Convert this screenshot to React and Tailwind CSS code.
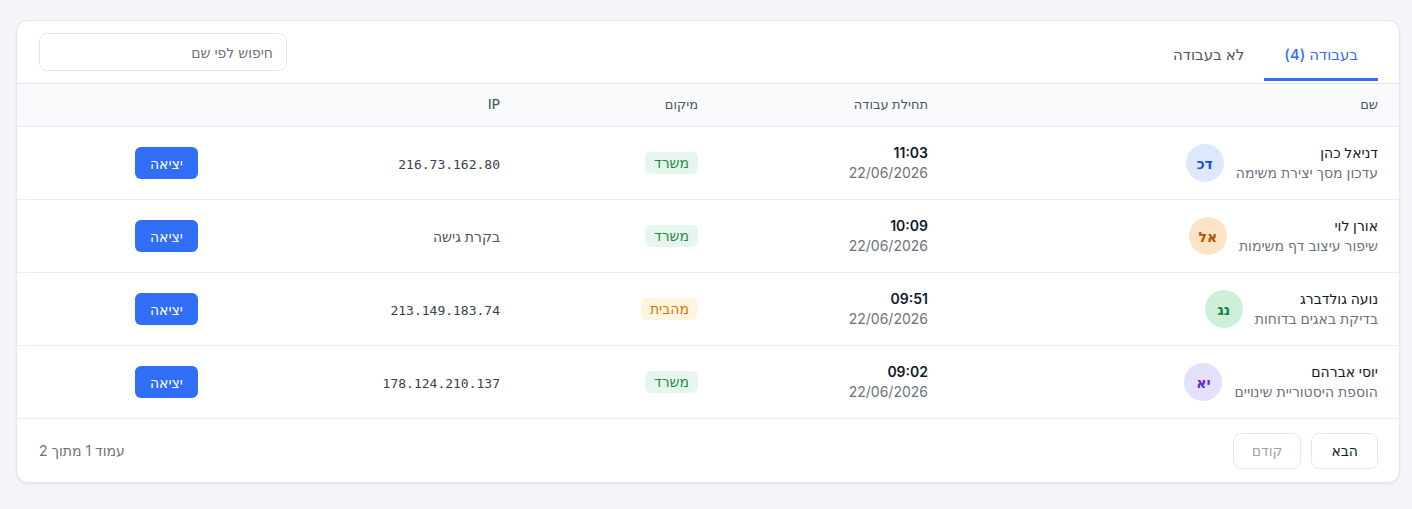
import React from "react";

const rows = [
  { name: "דניאל כהן", task: "עדכון מסך יצירת משימה", initials: "דכ", av: "bg-[#dde8fd] text-[#1d4ed8]", time: "11:03", date: "22/06/2026", loc: "משרד", ip: "216.73.162.80", mono: true },
  { name: "אורן לוי", task: "שיפור עיצוב דף משימות", initials: "אל", av: "bg-[#fde3c6] text-[#b45309]", time: "10:09", date: "22/06/2026", loc: "משרד", ip: "בקרת גישה", mono: false },
  { name: "נועה גולדברג", task: "בדיקת באגים בדוחות", initials: "נג", av: "bg-[#cdeed7] text-[#15803d]", time: "09:51", date: "22/06/2026", loc: "מהבית", ip: "213.149.183.74", mono: true },
  { name: "יוסי אברהם", task: "הוספת היסטוריית שינויים", initials: "יא", av: "bg-[#e5e0fc] text-[#6d28d9]", time: "09:02", date: "22/06/2026", loc: "משרד", ip: "178.124.210.137", mono: true },
];

const grid = "grid grid-cols-[451px_230px_198px_302px_1fr]";

export default function App() {
  return (
    <div className="min-h-[509px] bg-[#f3f5f9] pt-5 pl-4 pr-3 pb-6 font-['Inter','DejaVu_Sans',sans-serif]">
      <div dir="rtl" className="rounded-xl border border-[#e3e7ee] bg-white shadow-[0_1px_3px_rgba(15,23,42,0.08)] overflow-hidden">
        {/* Tabs bar */}
        <div className="flex h-[63px] items-center justify-between border-b border-[#e3e7ee] pr-[21px] pl-[22px]">
          <div className="flex self-end mb-[2px]">
            <button className="border-b-[3px] border-[#2f6ef5] px-5 pt-3 pb-[12px] text-[15px] font-medium leading-[22px] text-[#2f6ef5]">
              בעבודה (4)
            </button>
            <button className="border-b-[3px] border-transparent px-5 pt-3 pb-[12px] text-[15px] font-medium leading-[22px] text-[#4b5563]">
              לא בעבודה
            </button>
          </div>
          <div className="flex h-[38px] w-[248px] items-center rounded-lg border border-[#e3e7ee] px-[13px] text-[14px] text-[#6b7280]">
            חיפוש לפי שם
          </div>
        </div>

        {/* Header */}
        <div className={`${grid} h-[43px] items-center border-b border-[#e3e7ee] bg-[#f8fafc] text-[13px] font-medium text-[#4b5563]`}>
          <div className="pr-[21px]">שם</div>
          <div className="pr-5">תחילת עבודה</div>
          <div className="pr-5">מיקום</div>
          <div className="pr-5">IP</div>
          <div></div>
        </div>

        {/* Rows */}
        {rows.map((r, i) => (
          <div key={i} className={`${grid} h-[73px] items-center border-b border-[#e9ecf2]`}>
            <div className="flex items-center gap-3 pr-[21px]">
              <div className="flex flex-col">
                <span className="text-[14px] font-medium leading-5 text-[#111827]">{r.name}</span>
                <span className="text-[14px] leading-5 text-[#6b7280]">{r.task}</span>
              </div>
              <div className={`flex h-[38px] w-[38px] items-center justify-center rounded-full text-[14px] font-bold ${r.av}`}>
                {r.initials}
              </div>
            </div>
            <div className="flex flex-col pr-5">
              <span className="text-[14px] font-semibold leading-5 text-[#111827]">{r.time}</span>
              <span className="text-[14px] leading-5 text-[#6b7280]">{r.date}</span>
            </div>
            <div className="flex pr-5">
              {r.loc === "משרד" ? (
                <span className="rounded-md bg-[#e7f6ec] px-[9px] py-[1px] text-[14px] leading-5 text-[#1e8a47]">{r.loc}</span>
              ) : (
                <span className="rounded-md bg-[#fff4de] px-[9px] py-[1px] text-[14px] leading-5 text-[#d97706]">{r.loc}</span>
              )}
            </div>
            <div className="pr-5">
              {r.mono ? (
                <span dir="ltr" className="font-['DejaVu_Sans_Mono',monospace] text-[13px] text-[#374151]">{r.ip}</span>
              ) : (
                <span className="text-[14px] text-[#4b5563]">{r.ip}</span>
              )}
            </div>
            <div className="flex pr-5">
              <button className="h-8 rounded-md bg-[#2f6ef5] px-[15px] text-[14px] font-medium text-white">יציאה</button>
            </div>
          </div>
        ))}

        {/* Footer */}
        <div className="flex h-[63px] items-center justify-between pr-[21px] pl-[22px]">
          <div className="flex gap-[10px]">
            <button className="h-[36px] rounded-lg border border-[#e3e7ee] px-[19px] text-[14px] font-medium text-[#111827]">הבא</button>
            <button className="h-[36px] rounded-lg border border-[#e3e7ee] px-[18px] text-[14px] font-medium text-[#9ca3af]">קודם</button>
          </div>
          <div className="text-[14px] text-[#6b7280]">עמוד 1 מתוך 2</div>
        </div>
      </div>
    </div>
  );
}
